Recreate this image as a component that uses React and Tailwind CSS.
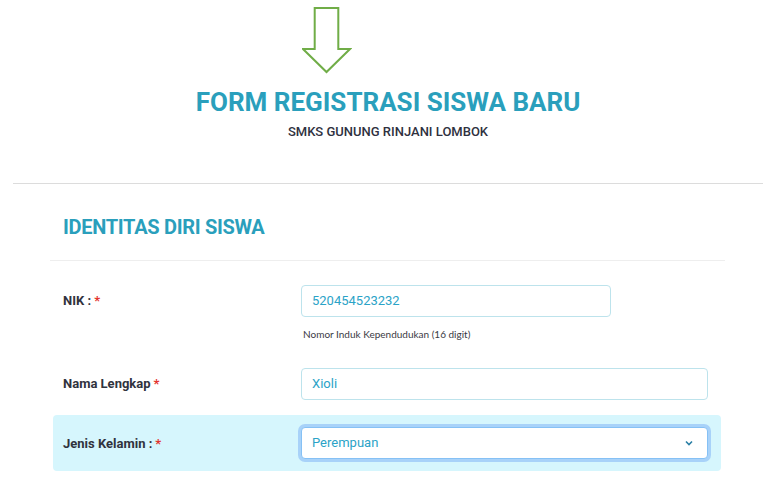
const labelCls = "text-[13px] leading-[16px] font-bold text-[#30333d]"
const inputCls =
  "h-[32px] rounded-[4px] border border-[#bde3ec] bg-white px-[10px] text-[13px] text-[#2ba3c7] flex items-center"

function Req() {
  return <span className="text-[#e3342f] ml-[3px]">*</span>
}

export default function App() {
  return (
    <div className="min-h-screen bg-white font-['Roboto','Liberation_Sans',sans-serif]">
      {/* kepala halaman */}
      <header className="flex flex-col items-center pt-[7px]">
        <svg className="ml-[-123px]" width="50" height="67" viewBox="0 0 50 67">
          <path
            d="M12.7 1H36.3V42H48L24.5 65L1 42H12.7Z"
            fill="none"
            stroke="#70ad47"
            strokeWidth="2"
            strokeLinejoin="miter"
          />
        </svg>
        <h1 className="mt-[13px] text-[26px] leading-[30px] font-bold text-[#2a9fbc]">
          FORM REGISTRASI SISWA BARU
        </h1>
        <p className="mt-[7px] text-[13px] leading-[16px] font-medium text-[#2f3140]">
          SMKS GUNUNG RINJANI LOMBOK
        </p>
      </header>

      <hr className="mx-[13px] mt-[43px] border-0 border-t border-[#dcdcdc]" />

      {/* identitas */}
      <section className="mx-[50px] mt-[31px] w-[675px]">
        <h2 className="pl-[13px] text-[20px] leading-[24px] font-bold text-[#2a9fbc] tracking-[-0.3px]">
          IDENTITAS DIRI SISWA
        </h2>
        <div className="mt-[21px] border-t border-[#eeeeee]" />

        <div className="mx-[3px] mt-[24px] w-[668px]">
          <div className="flex px-[10px]">
            <div className="w-[238px] h-[32px] flex items-center">
              <span className={labelCls}>
                NIK :<Req />
              </span>
            </div>
            <div className="flex flex-col">
              <div className={`${inputCls} w-[310px]`}>520454523232</div>
              <p className="mt-[10px] pl-[2px] text-[10px] leading-[14px] text-[#3a3a44] font-['Lato',sans-serif]">
                Nomor Induk Kependudukan (16 digit)
              </p>
            </div>
          </div>

          <div className="flex px-[10px] mt-[27px]">
            <div className="w-[238px] h-[32px] flex items-center">
              <span className={labelCls}>
                Nama Lengkap
                <Req />
              </span>
            </div>
            <div className={`${inputCls} w-[407px]`}>Xioli</div>
          </div>

          <div className="flex items-center px-[10px] py-[12px] mt-[15px] rounded-[4px] bg-[#d6f6fd]">
            <div className="w-[238px]">
              <span className={labelCls}>
                Jenis Kelamin :<Req />
              </span>
            </div>
            <div className="h-[32px] w-[407px] rounded-[4px] border border-[#86c1f5] bg-white shadow-[0_0_0_3px_#a8d2f9] px-[10px] flex items-center justify-between text-[13px] text-[#2ba3c7]">
              <span>Perempuan</span>
              <svg width="8" height="6" viewBox="0 0 8 6" className="mr-[4px]">
                <path d="M1 1.5L4 4.5L7 1.5" fill="none" stroke="#2a7fa5" strokeWidth="1.6" />
              </svg>
            </div>
          </div>
        </div>
      </section>
    </div>
  )
}
